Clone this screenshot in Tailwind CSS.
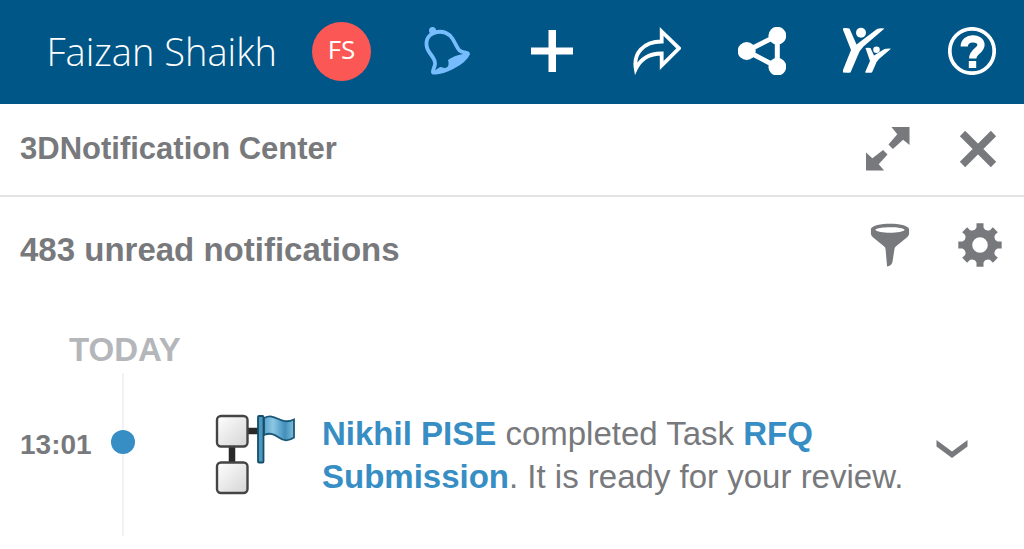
<!DOCTYPE html>
<html lang="en">
<head>
    <meta charset="UTF-8">
    <meta name="viewport" content="width=device-width, initial-scale=1.0">
    <title>3DNotification Center</title>
    <script src="https://cdn.jsdelivr.net/npm/@tailwindcss/browser@4"></script>
</head>
<body class="bg-white font-['Liberation_Sans',Arial,sans-serif] text-[#77797c]">
    <!-- Top bar -->
    <header class="flex h-[104px] items-center justify-end bg-[#005686] pr-7 pb-0.5 text-white">
        <span class="font-['Open_Sans',sans-serif] text-[38px] leading-[48px] font-light whitespace-nowrap">Faizan Shaikh</span>
        <button aria-label="Profile" class="ml-[35px] size-[59px] shrink-0 rounded-full bg-[#fb5855] pb-1 font-['Open_Sans',sans-serif] text-[26px] leading-8 font-medium">FS</button>
        <nav class="ml-[52px] flex gap-[57px]">
            <button aria-label="Notifications" class="text-[#77bdfe]">
                <svg class="size-12" viewBox="0 0 48 48" fill="none">
                    <circle cx="9.500" cy="3.500" r="3.500" fill="currentColor"/>
                    <path d="M11 6C4 8.500 2 15 4.500 22C7 28 12.500 31 12 37C11.800 40 9.500 43 10 45.500C20 47 41 36 45 27C45 25 40.500 26.500 36.500 23.500C32.500 19 31.500 13 27 8.500C21.500 4 16 4 11 6Z" stroke="currentColor" stroke-width="3.800" stroke-linejoin="round"/>
                    <path d="M45 26C39 27 31 28.500 25 33C26.500 38 25 41 21.500 41C19 41 18.500 39 15.500 41C13.500 42 11 44 10 46C20 47 40 38 45 26Z" fill="currentColor"/>
                </svg>
            </button>
            <button aria-label="Add">
                <svg class="size-12" viewBox="0 0 48 48" fill="currentColor">
                    <path d="M20.500 3H28V20.500H45V27.500H28V45H20.500V27.500H3V20.500H20.500Z"/>
                </svg>
            </button>
            <button aria-label="Share">
                <svg class="size-12" viewBox="0 0 48 48" fill="none" stroke="currentColor" stroke-width="3.8">
                    <path d="M28.700 4.500L46 21.300L28.700 38.500V26.500C17 26.500 8 31 2.800 42C0 27 10 14.500 28.700 14.500Z"/>
                </svg>
            </button>
            <button aria-label="Communities">
                <svg class="size-12" viewBox="0 0 48 48" fill="currentColor">
                    <path d="M8.700 24L39.300 8.500V40Z" fill="none" stroke="currentColor" stroke-width="5"/>
                    <circle cx="8.700" cy="24" r="9"/>
                    <circle cx="39.300" cy="8.700" r="8.900"/>
                    <circle cx="39.300" cy="39.700" r="8.900"/>
                </svg>
            </button>
            <button aria-label="People">
                <svg class="size-12" viewBox="0 0 48 48" fill="currentColor">
                    <circle cx="18" cy="5.800" r="5"/>
                    <path d="M-0.500 1.500Q3 0.500 6.500 1.500L13.500 17.500L34 2Q37 0.700 41.500 1.500L20.500 19.500Q16.500 23.500 15 28L7.500 45.500Q4 46 -1 45.500L8 23Z"/>
                    <circle cx="33.500" cy="22.800" r="3.300"/>
                    <path d="M22.500 21Q25 20.300 27.500 21L31 28.500L41.500 22Q45 21.300 48 21.800L36 32Q33.500 34.500 32.500 37.500L29 45.500Q25.500 46 22 45.500L27 34Z"/>
                </svg>
            </button>
            <button aria-label="Help">
                <svg class="size-12" viewBox="0 0 48 48" fill="none" stroke="currentColor">
                    <circle cx="24" cy="24" r="22.200" stroke-width="3.700"/>
                    <path d="M16.200 19.500C16.200 9.500 33 9.500 33 18C33 24 24.700 24 24.700 31.500" stroke-width="7.200"/>
                    <path d="M24.500 34V41" stroke-width="7.400"/>
                </svg>
            </button>
        </nav>
    </header>

    <main>
        <!-- Panel title -->
        <div class="flex h-[93px] items-center justify-between border-b-2 border-[#e2e3e4] pr-6 pb-0.5 pl-5">
            <h1 class="text-[31px] leading-9 font-bold">3DNotification Center</h1>
            <div class="flex gap-[46px]">
                <button aria-label="Expand">
                    <svg class="size-11" viewBox="0 0 45 45" fill="currentColor">
                        <path d="M26 0H44.500V18.500L38 13L27.500 22.500L23 18L32 7.500Z"/>
                        <path d="M0 26V44.500H18.500L13 38L22 28L17.500 23.500L6.500 32Z"/>
                    </svg>
                </button>
                <button aria-label="Close">
                    <svg class="size-11" viewBox="0 0 44 44" fill="none" stroke="currentColor" stroke-width="7.500">
                        <path d="M6.500 6.500L37.500 37.500M37.500 6.500L6.500 37.500"/>
                    </svg>
                </button>
            </div>
        </div>

        <!-- Unread count -->
        <div class="flex h-24 items-center justify-between pr-[22px] pl-5">
            <h2 class="pt-2.5 text-[33px] leading-10 font-bold">483 unread notifications</h2>
            <div class="flex gap-[46px]">
                <button aria-label="Filter">
                    <svg class="size-11" viewBox="0 0 45 45" fill="currentColor">
                        <path fill-rule="evenodd" d="M3 6C5 -1 40 -1 42 6V11Q42 13 40 14.500L29 23.500Q27 25 27 27L25 40Q24 44 19.500 44.500L18 27Q18 25 16 23.500L5 14.500Q3 13 3 11ZM7.500 7C9 11 36 11 37.500 7C36 3.500 9 3.500 7.500 7Z"/>
                    </svg>
                </button>
                <button aria-label="Settings">
                    <svg class="size-11" viewBox="-22 -22 44 44" fill="currentColor">
                        <circle r="11.800" fill="none" stroke="currentColor" stroke-width="8"/>
                        <path id="teeth" d="M-3.500 -21.700H3.500V-17.500Q4.500 -15 8 -13.500H-8Q-4.500 -15 -3.500 -17.500Z"/>
                        <use href="#teeth" transform="rotate(45)"/>
                        <use href="#teeth" transform="rotate(90)"/>
                        <use href="#teeth" transform="rotate(135)"/>
                        <use href="#teeth" transform="rotate(180)"/>
                        <use href="#teeth" transform="rotate(225)"/>
                        <use href="#teeth" transform="rotate(270)"/>
                        <use href="#teeth" transform="rotate(315)"/>
                    </svg>
                </button>
            </div>
        </div>

        <!-- Timeline -->
        <section class="pt-[37px]">
            <h3 class="pl-[69px] text-[33px] leading-10 font-bold text-[#b4b6ba]">TODAY</h3>
            <article class="mt-[3px] flex pr-[52px] pl-5">
                <time class="w-[91px] shrink-0 pt-14 text-[28px] leading-8 font-bold">13:01</time>
                <div class="flex w-6 shrink-0 flex-col items-center">
                    <span class="h-[57px] w-0.5 bg-[#f2f2f3]"></span>
                    <span class="size-6 rounded-full bg-[#368ec4]"></span>
                    <span class="w-0.5 grow bg-[#f2f2f3]"></span>
                </div>
                <svg class="mt-[41px] ml-20 h-[82px] w-[82px] shrink-0" viewBox="0 0 82 82" fill="none">
                    <defs>
                        <linearGradient id="box" x1="0" y1="0" x2="1" y2="1">
                            <stop offset="0" stop-color="#ffffff"/>
                            <stop offset="1" stop-color="#d4d4d4"/>
                        </linearGradient>
                        <linearGradient id="flag" x1="0" y1="0" x2="1" y2="0">
                            <stop offset="0" stop-color="#5ba4cb"/>
                            <stop offset="0.300" stop-color="#8cc7e3"/>
                            <stop offset="0.700" stop-color="#4290bb"/>
                            <stop offset="1" stop-color="#80bddb"/>
                        </linearGradient>
                    </defs>
                    <path d="M17 32V49M32 17H43" stroke="#292929" stroke-width="6.500"/>
                    <rect x="2" y="2" width="30.500" height="30.500" rx="4" fill="url(#box)" stroke="#444444" stroke-width="2.400"/>
                    <rect x="2" y="48.500" width="30.500" height="30.500" rx="4" fill="url(#box)" stroke="#444444" stroke-width="2.400"/>
                    <path d="M49 4C61 -2 65 12 79 5.500V23.500C65 33 63 15 49 21Z" fill="url(#flag)" stroke="#195778" stroke-width="1.800"/>
                    <rect x="43" y="2" width="5.500" height="46.500" rx="1" fill="#4d98bf" stroke="#174d69" stroke-width="1.800"/>
                </svg>
                <p class="mt-[39px] mb-[38px] ml-[25px] grow text-[33px] leading-[43px]"><a href="#" class="font-bold text-[#368ec4]">Nikhil PISE</a> completed Task <a href="#" class="font-bold text-[#368ec4]">RFQ Submission</a>. It is ready for your review.</p>
                <button aria-label="Show details" class="mt-[60px] ml-5 flex h-8 w-10 shrink-0 items-center justify-center">
                    <svg class="h-5 w-8" viewBox="0 0 32 20" fill="currentColor">
                        <path d="M0.500 1L16 12.500L31.500 1V7.500L16 19L0.500 7.500Z"/>
                    </svg>
                </button>
            </article>
        </section>
    </main>
</body>
</html>
